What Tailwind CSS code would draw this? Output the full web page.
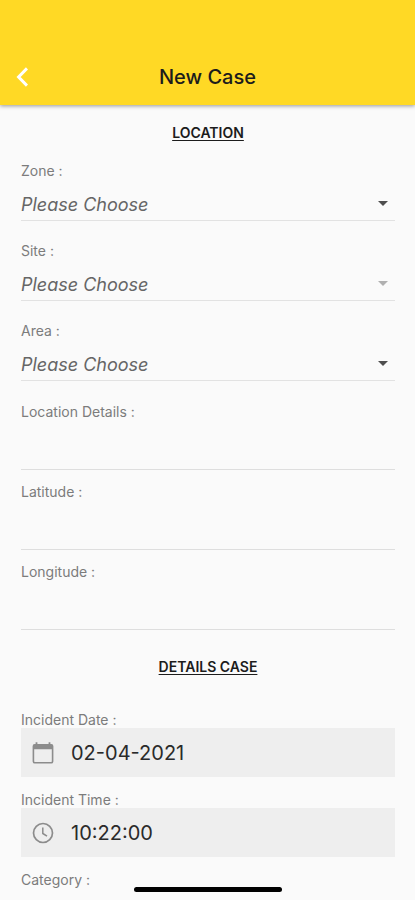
<!DOCTYPE html>
<html lang="en">
<head>
<meta charset="utf-8">
<meta name="viewport" content="width=device-width, initial-scale=1">
<title>New Case</title>
<script src="https://cdn.jsdelivr.net/npm/@tailwindcss/browser@4"></script>
</head>
<body class="min-h-screen bg-[#fafafa] font-['Inter','Roboto',sans-serif] text-[#1c1c1c]">
<header class="relative grid grid-cols-[44px_1fr_44px] items-center bg-[#ffd925] pt-[49px] shadow-[0_1px_4px_rgba(0,0,0,0.4)]">
  <button type="button" aria-label="Back" class="flex h-14 items-center pl-4 text-white">
    <svg class="h-5 w-3" viewBox="0 0 12 20" fill="none" stroke="currentColor" stroke-width="3"><path d="M11 1.4 2.6 10l8.4 8.6"/></svg>
  </button>
  <h1 class="text-center text-[20px] leading-6 font-medium">New Case</h1>
</header>
<main>
  <form class="pt-5 pr-5 pb-3 pl-[21px]">
    <section>
      <h2 class="text-center text-[14px] leading-4 font-semibold underline underline-offset-2">LOCATION</h2>
      <div class="mt-[22px] flex flex-col gap-[22px]">
        <div class="flex flex-col gap-2">
          <label for="zone" class="text-[14px] leading-4 text-[#7c7c7c]">Zone :</label>
          <div class="relative">
            <select id="zone" class="h-[34px] w-full appearance-none border-b border-[#e2e2e2] bg-transparent pt-px text-[18px] text-[#666] italic"><option>Please Choose</option></select>
            <svg class="pointer-events-none absolute top-3.5 right-[7px] h-[5px] w-[10px] text-[#4e4e4e]" viewBox="0 0 10 5" fill="currentColor"><path d="M0 0h10L5 5z"/></svg>
          </div>
        </div>
        <div class="flex flex-col gap-2">
          <label for="site" class="text-[14px] leading-4 text-[#7c7c7c]">Site :</label>
          <div class="relative">
            <select id="site" disabled class="h-[34px] w-full appearance-none border-b border-[#e2e2e2] bg-transparent pt-px text-[18px] text-[#666] italic opacity-100"><option>Please Choose</option></select>
            <svg class="pointer-events-none absolute top-3.5 right-[7px] h-[5px] w-[10px] text-[#b0b0b0]" viewBox="0 0 10 5" fill="currentColor"><path d="M0 0h10L5 5z"/></svg>
          </div>
        </div>
        <div class="flex flex-col gap-2">
          <label for="area" class="text-[14px] leading-4 text-[#7c7c7c]">Area :</label>
          <div class="relative">
            <select id="area" class="h-[34px] w-full appearance-none border-b border-[#e2e2e2] bg-transparent pt-px text-[18px] text-[#666] italic"><option>Please Choose</option></select>
            <svg class="pointer-events-none absolute top-3.5 right-[7px] h-[5px] w-[10px] text-[#4e4e4e]" viewBox="0 0 10 5" fill="currentColor"><path d="M0 0h10L5 5z"/></svg>
          </div>
        </div>
      </div>
      <div class="mt-[23px] flex flex-col gap-3.5">
        <div class="flex flex-col">
          <label for="details" class="text-[14px] leading-4 text-[#7c7c7c]">Location Details :</label>
          <input id="details" type="text" class="h-[50px] w-full border-b border-[#dedede] bg-transparent text-[18px] outline-none">
        </div>
        <div class="flex flex-col">
          <label for="latitude" class="text-[14px] leading-4 text-[#7c7c7c]">Latitude :</label>
          <input id="latitude" type="text" class="h-[50px] w-full border-b border-[#dedede] bg-transparent text-[18px] outline-none">
        </div>
        <div class="flex flex-col">
          <label for="longitude" class="text-[14px] leading-4 text-[#7c7c7c]">Longitude :</label>
          <input id="longitude" type="text" class="h-[50px] w-full border-b border-[#dedede] bg-transparent text-[18px] outline-none">
        </div>
      </div>
    </section>
    <section class="mt-[29px]">
      <h2 class="text-center text-[14px] leading-4 font-semibold underline underline-offset-2">DETAILS CASE</h2>
      <div class="mt-[37px] flex flex-col gap-[15px]">
        <div class="flex flex-col">
          <label for="date" class="text-[14px] leading-4 text-[#7c7c7c]">Incident Date :</label>
          <div class="flex h-[49px] items-center gap-4 bg-[#eeeeee] px-2.5">
            <svg class="h-6 w-6 shrink-0 text-[#8c8c8c]" viewBox="0 0 24 24" fill="currentColor"><path fill-rule="evenodd" d="M4.6 1.2h1.8v1.9h11.2V1.2h1.8v1.9h.9a2.1 2.1 0 0 1 2.1 2.1v15.2a2.1 2.1 0 0 1-2.1 2.1H3.7a2.1 2.1 0 0 1-2.1-2.1V5.2a2.1 2.1 0 0 1 2.1-2.1h.9zM3.2 8.2v12.1q0 .6.6.6h16.4q.6 0 .6-.6V8.2z"/></svg>
            <input id="date" type="text" value="02-04-2021" class="min-w-0 flex-1 bg-transparent text-[20px] text-[#2a2a2a] outline-none">
          </div>
        </div>
        <div class="flex flex-col">
          <label for="time" class="text-[14px] leading-4 text-[#7c7c7c]">Incident Time :</label>
          <div class="flex h-[49px] items-center gap-4 bg-[#eeeeee] px-2.5">
            <svg class="h-6 w-6 shrink-0 text-[#8c8c8c]" viewBox="0 0 24 24" fill="none" stroke="currentColor" stroke-width="1.7"><circle cx="12" cy="12" r="9.5"/><path stroke-width="1.5" d="M11.8 6.5v6l4.2 2.6"/></svg>
            <input id="time" type="text" value="10:22:00" class="min-w-0 flex-1 bg-transparent text-[20px] text-[#2a2a2a] outline-none">
          </div>
        </div>
        <p class="text-[14px] leading-4 text-[#7c7c7c]">Category :</p>
      </div>
    </section>
  </form>
</main>
<div class="fixed bottom-2 left-1/2 h-[5px] w-[148px] -translate-x-1/2 rounded-full bg-black"></div>
</body>
</html>
